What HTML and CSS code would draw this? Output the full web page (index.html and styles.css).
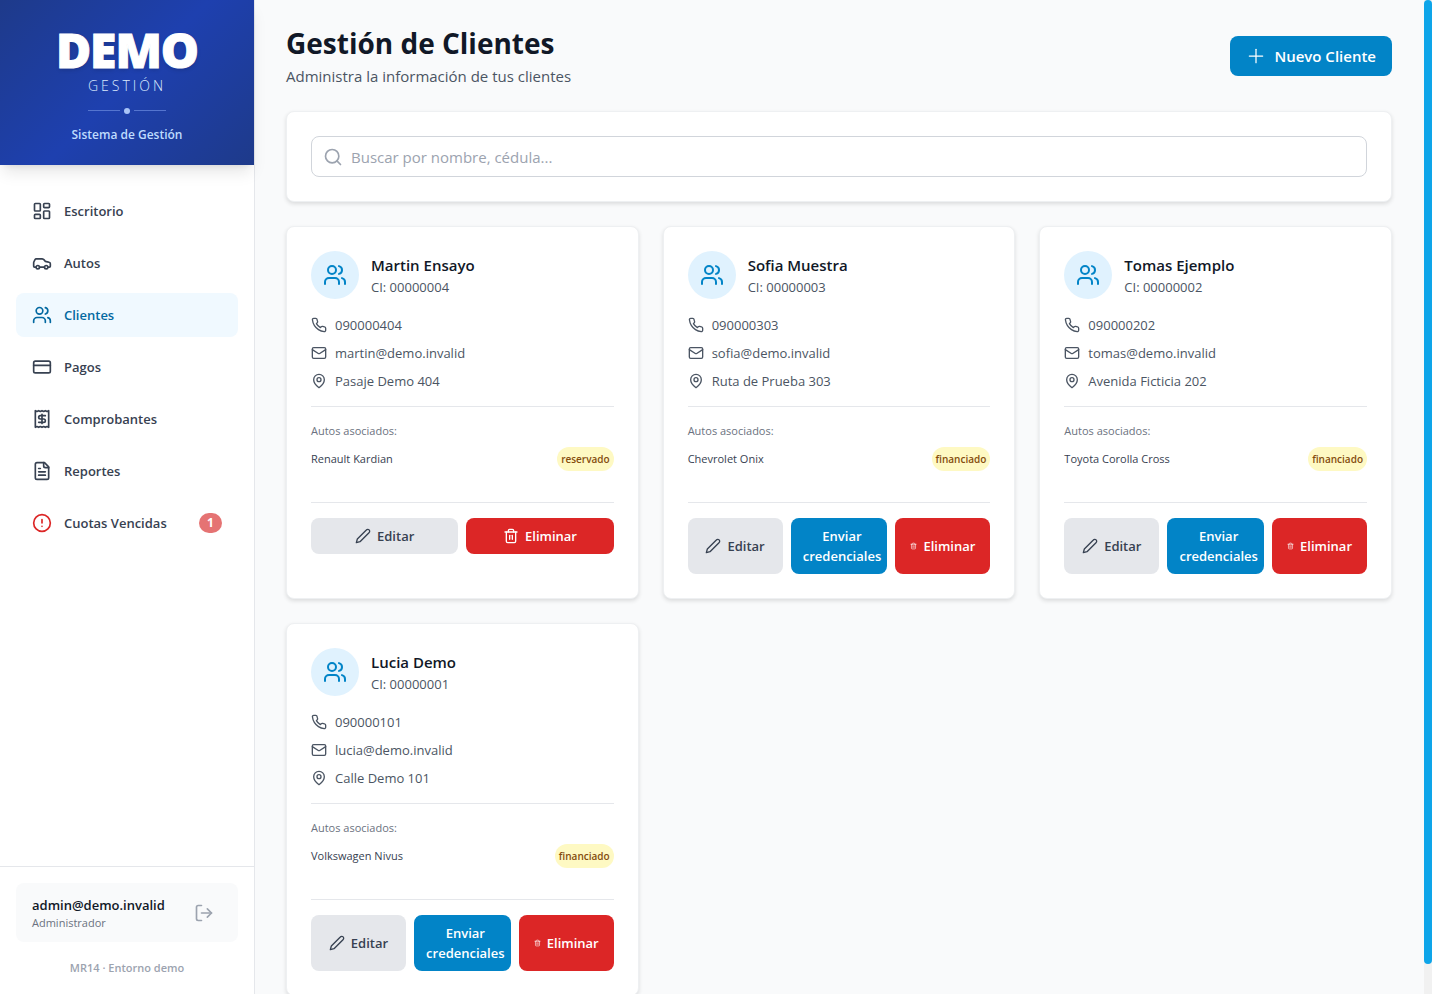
FILE: index.html
```html
<!DOCTYPE html>
<html lang="es">
<head>
<meta charset="utf-8">
<meta name="viewport" content="width=device-width, initial-scale=1">
<title>Gestión de Clientes</title>
<link rel="stylesheet" href="styles.css">
</head>
<body>
<svg class="sprite" aria-hidden="true">
  <symbol id="i-dashboard" viewBox="0 0 24 24"><rect x="3" y="3" width="7" height="9" rx="1"/><rect x="14" y="3" width="7" height="5" rx="1"/><rect x="14" y="12" width="7" height="9" rx="1"/><rect x="3" y="16" width="7" height="5" rx="1"/></symbol>
  <symbol id="i-car" viewBox="0 0 24 24"><path d="M19 17h2c.6 0 1-.4 1-1v-3c0-.9-.7-1.7-1.500-1.900C18.700 10.600 16 10 16 10s-1.300-1.400-2.200-2.300c-.5-.4-1.100-.7-1.800-.7H5c-.6 0-1.100.4-1.400.9l-1.400 2.900A3.700 3.700 0 0 0 2 12v4c0 .6.4 1 1 1h2"/><circle cx="7" cy="17" r="2"/><path d="M9 17h6"/><circle cx="17" cy="17" r="2"/></symbol>
  <symbol id="i-users" viewBox="0 0 24 24"><path d="M16 21v-2a4 4 0 0 0-4-4H6a4 4 0 0 0-4 4v2"/><circle cx="9" cy="7" r="4"/><path d="M22 21v-2a4 4 0 0 0-3-3.870"/><path d="M16 3.130a4 4 0 0 1 0 7.750"/></symbol>
  <symbol id="i-card" viewBox="0 0 24 24"><rect x="2" y="5" width="20" height="14" rx="2"/><path d="M2 10h20"/></symbol>
  <symbol id="i-receipt" viewBox="0 0 24 24"><path d="M4 2v20l2-1 2 1 2-1 2 1 2-1 2 1 2-1 2 1V2l-2 1-2-1-2 1-2-1-2 1-2-1-2 1Z"/><path d="M16 8h-6a2 2 0 1 0 0 4h4a2 2 0 1 1 0 4H8"/><path d="M12 17.500v-11"/></symbol>
  <symbol id="i-file" viewBox="0 0 24 24"><path d="M15 2H6a2 2 0 0 0-2 2v16a2 2 0 0 0 2 2h12a2 2 0 0 0 2-2V7Z"/><path d="M14 2v4a2 2 0 0 0 2 2h4"/><path d="M10 9H8"/><path d="M16 13H8"/><path d="M16 17H8"/></symbol>
  <symbol id="i-alert" viewBox="0 0 24 24"><circle cx="12" cy="12" r="10"/><path d="M12 8v4"/><path d="M12 16h.01"/></symbol>
  <symbol id="i-logout" viewBox="0 0 24 24"><path d="M9 21H5a2 2 0 0 1-2-2V5a2 2 0 0 1 2-2h4"/><path d="m16 17 5-5-5-5"/><path d="M21 12H9"/></symbol>
  <symbol id="i-plus" viewBox="0 0 24 24"><path d="M4 12h16"/><path d="M12 4v16"/></symbol>
  <symbol id="i-search" viewBox="0 0 24 24"><circle cx="11" cy="11" r="8"/><path d="m21 21-4.300-4.300"/></symbol>
  <symbol id="i-phone" viewBox="0 0 24 24"><path d="M22 16.920v3a2 2 0 0 1-2.180 2 19.790 19.790 0 0 1-8.630-3.070 19.500 19.500 0 0 1-6-6 19.790 19.790 0 0 1-3.070-8.670A2 2 0 0 1 4.110 2h3a2 2 0 0 1 2 1.720 12.840 12.840 0 0 0 .7 2.810 2 2 0 0 1-.45 2.110L8.090 9.910a16 16 0 0 0 6 6l1.270-1.270a2 2 0 0 1 2.110-.45 12.840 12.840 0 0 0 2.810.7A2 2 0 0 1 22 16.920z"/></symbol>
  <symbol id="i-mail" viewBox="0 0 24 24"><rect x="2" y="4" width="20" height="16" rx="2"/><path d="m22 7-8.970 5.700a1.940 1.940 0 0 1-2.060 0L2 7"/></symbol>
  <symbol id="i-pin" viewBox="0 0 24 24"><path d="M20 10c0 6-8 12-8 12s-8-6-8-12a8 8 0 0 1 16 0Z"/><circle cx="12" cy="10" r="3"/></symbol>
  <symbol id="i-pencil" viewBox="0 0 24 24"><path d="M17 3a2.850 2.830 0 1 1 4 4L7.500 20.500 2 22l1.500-5.500Z"/></symbol>
  <symbol id="i-trash" viewBox="0 0 24 24"><path d="M3 6h18"/><path d="M19 6v14c0 1-1 2-2 2H7c-1 0-2-1-2-2V6"/><path d="M8 6V4c0-1 1-2 2-2h4c1 0 2 1 2 2v2"/><path d="M10 11v6"/><path d="M14 11v6"/></symbol>
</svg>

<div class="app">
  <aside class="sidebar">
    <div class="brand">
      <div class="brand-name">DEMO</div>
      <div class="brand-sub">GESTIÓN</div>
      <div class="brand-rule"><span class="line"></span><span class="dot"></span><span class="line"></span></div>
      <div class="brand-tag">Sistema de Gestión</div>
    </div>
    <nav class="nav">
      <a class="nav-item" href="#"><svg class="icon icon-20"><use href="#i-dashboard"/></svg>Escritorio</a>
      <a class="nav-item" href="#"><svg class="icon icon-20"><use href="#i-car"/></svg>Autos</a>
      <a class="nav-item active" href="#" aria-current="page"><svg class="icon icon-20"><use href="#i-users"/></svg>Clientes</a>
      <a class="nav-item" href="#"><svg class="icon icon-20"><use href="#i-card"/></svg>Pagos</a>
      <a class="nav-item" href="#"><svg class="icon icon-20"><use href="#i-receipt"/></svg>Comprobantes</a>
      <a class="nav-item" href="#"><svg class="icon icon-20"><use href="#i-file"/></svg>Reportes</a>
      <a class="nav-item" href="#"><svg class="icon icon-20 danger"><use href="#i-alert"/></svg>Cuotas Vencidas<span class="count">1</span></a>
    </nav>
    <div class="side-foot">
      <div class="user">
        <div>
          <div class="user-name">admin@demo.invalid</div>
          <div class="user-role">Administrador</div>
        </div>
        <button class="logout" type="button" aria-label="Cerrar sesión"><svg class="icon icon-20"><use href="#i-logout"/></svg></button>
      </div>
      <p class="version">MR14 · Entorno demo</p>
    </div>
  </aside>

  <main class="main">
    <header class="page-head">
      <div>
        <h1>Gestión de Clientes</h1>
        <p>Administra la información de tus clientes</p>
      </div>
      <button class="btn btn-primary btn-new" type="button"><svg class="icon icon-20 thin"><use href="#i-plus"/></svg>Nuevo Cliente</button>
    </header>

    <section class="card search-card">
      <label class="search"><svg class="icon icon-20"><use href="#i-search"/></svg><input type="text" placeholder="Buscar por nombre, cédula..." aria-label="Buscar por nombre, cédula"></label>
    </section>

    <section class="grid">
      <article class="card client">
        <div class="client-head"><span class="avatar"><svg class="icon icon-24"><use href="#i-users"/></svg></span><div><h2>Martin Ensayo</h2><p>CI: 00000004</p></div></div>
        <ul class="contact">
          <li><svg class="icon icon-16"><use href="#i-phone"/></svg>090000404</li>
          <li><svg class="icon icon-16"><use href="#i-mail"/></svg>martin@demo.invalid</li>
          <li><svg class="icon icon-16"><use href="#i-pin"/></svg>Pasaje Demo 404</li>
        </ul>
        <div class="cars"><p>Autos asociados:</p><div class="car">Renault Kardian<span class="badge">reservado</span></div></div>
        <div class="actions">
          <button class="btn btn-gray" type="button"><svg class="icon icon-16"><use href="#i-pencil"/></svg>Editar</button>
          <button class="btn btn-red" type="button"><svg class="icon icon-16"><use href="#i-trash"/></svg>Eliminar</button>
        </div>
      </article>

      <article class="card client">
        <div class="client-head"><span class="avatar"><svg class="icon icon-24"><use href="#i-users"/></svg></span><div><h2>Sofia Muestra</h2><p>CI: 00000003</p></div></div>
        <ul class="contact">
          <li><svg class="icon icon-16"><use href="#i-phone"/></svg>090000303</li>
          <li><svg class="icon icon-16"><use href="#i-mail"/></svg>sofia@demo.invalid</li>
          <li><svg class="icon icon-16"><use href="#i-pin"/></svg>Ruta de Prueba 303</li>
        </ul>
        <div class="cars"><p>Autos asociados:</p><div class="car">Chevrolet Onix<span class="badge">financiado</span></div></div>
        <div class="actions">
          <button class="btn btn-gray" type="button"><svg class="icon icon-16"><use href="#i-pencil"/></svg>Editar</button>
          <button class="btn btn-primary btn-send" type="button">Enviar credenciales</button>
          <button class="btn btn-red" type="button"><svg class="icon icon-tiny"><use href="#i-trash"/></svg>Eliminar</button>
        </div>
      </article>

      <article class="card client">
        <div class="client-head"><span class="avatar"><svg class="icon icon-24"><use href="#i-users"/></svg></span><div><h2>Tomas Ejemplo</h2><p>CI: 00000002</p></div></div>
        <ul class="contact">
          <li><svg class="icon icon-16"><use href="#i-phone"/></svg>090000202</li>
          <li><svg class="icon icon-16"><use href="#i-mail"/></svg>tomas@demo.invalid</li>
          <li><svg class="icon icon-16"><use href="#i-pin"/></svg>Avenida Ficticia 202</li>
        </ul>
        <div class="cars"><p>Autos asociados:</p><div class="car">Toyota Corolla Cross<span class="badge">financiado</span></div></div>
        <div class="actions">
          <button class="btn btn-gray" type="button"><svg class="icon icon-16"><use href="#i-pencil"/></svg>Editar</button>
          <button class="btn btn-primary btn-send" type="button">Enviar credenciales</button>
          <button class="btn btn-red" type="button"><svg class="icon icon-tiny"><use href="#i-trash"/></svg>Eliminar</button>
        </div>
      </article>

      <article class="card client">
        <div class="client-head"><span class="avatar"><svg class="icon icon-24"><use href="#i-users"/></svg></span><div><h2>Lucia Demo</h2><p>CI: 00000001</p></div></div>
        <ul class="contact">
          <li><svg class="icon icon-16"><use href="#i-phone"/></svg>090000101</li>
          <li><svg class="icon icon-16"><use href="#i-mail"/></svg>lucia@demo.invalid</li>
          <li><svg class="icon icon-16"><use href="#i-pin"/></svg>Calle Demo 101</li>
        </ul>
        <div class="cars"><p>Autos asociados:</p><div class="car">Volkswagen Nivus<span class="badge">financiado</span></div></div>
        <div class="actions">
          <button class="btn btn-gray" type="button"><svg class="icon icon-16"><use href="#i-pencil"/></svg>Editar</button>
          <button class="btn btn-primary btn-send" type="button">Enviar credenciales</button>
          <button class="btn btn-red" type="button"><svg class="icon icon-tiny"><use href="#i-trash"/></svg>Eliminar</button>
        </div>
      </article>
    </section>
  </main>
  <div class="scroll-track" aria-hidden="true"><div class="scroll-thumb"></div></div>
</div>
</body>
</html>
```

FILE: styles.css
```css
* { box-sizing: border-box; margin: 0; padding: 0; }

body {
  font-family: "Open Sans", "Noto Sans", sans-serif;
  font-size: 13px;
  line-height: 20px;
  color: #374151;
  background: #f9fafb;
}

button, input { font: inherit; color: inherit; }
button { border: 0; cursor: pointer; }
ul { list-style: none; }

.sprite { display: none; }
.icon {
  flex: none;
  fill: none;
  stroke: currentColor;
  stroke-width: 2;
  stroke-linecap: round;
  stroke-linejoin: round;
}
.icon-24 { width: 24px; height: 24px; }
.icon-20 { width: 20px; height: 20px; }
.icon-16 { width: 16px; height: 16px; }
.icon-tiny { width: 7px; height: 16px; }
.thin { stroke-width: 1.5; }

.app { display: flex; height: 100vh; overflow: hidden; }

/* Sidebar */
.sidebar {
  flex: none;
  width: 254px;
  display: flex;
  flex-direction: column;
  background: #fff;
  box-shadow: 1px 0 0 #e5e7eb;
}
.brand {
  display: flex;
  flex-direction: column;
  align-items: center;
  padding: 24px 16px 20px;
  color: #fff;
  background: linear-gradient(135deg, #1e3a8a 0%, #1e40af 50%, #1e3a8a 100%);
  box-shadow: 0 10px 15px -3px rgba(0, 0, 0, .1), 0 4px 6px -4px rgba(0, 0, 0, .1);
}
.brand-name {
  font-size: 48px;
  line-height: 52px;
  font-weight: 800;
  letter-spacing: -1px;
  -webkit-text-stroke: 1px #fff;
  text-shadow: 0 2px 4px rgba(0, 0, 0, .15);
}
.brand-sub {
  font-size: 14px;
  line-height: 20px;
  font-weight: 300;
  letter-spacing: 3px;
  color: #dbeafe;
}
.brand-rule { display: flex; align-items: center; gap: 4px; height: 29px; }
.line { width: 32px; height: 1px; background: #5575cf; }
.dot { width: 6px; height: 6px; border-radius: 50%; background: #a9c4f7; }
.brand-tag { font-size: 12px; line-height: 20px; font-weight: 600; color: #bfdbfe; }

.nav { flex: 1; display: flex; flex-direction: column; gap: 8px; padding: 24px 16px; }
.nav-item {
  display: flex;
  align-items: center;
  gap: 12px;
  height: 44px;
  padding: 0 16px;
  border-radius: 8px;
  font-weight: 600;
  color: #374151;
  text-decoration: none;
}
.nav-item.active { background: #f0f9ff; color: #0369a1; }
.danger { color: #dc2626; }
.count {
  margin-left: auto;
  width: 23px;
  border-radius: 10px;
  background: #e57373;
  color: #fff;
  font-size: 12px;
  font-weight: 700;
  text-align: center;
}
.side-foot { padding: 16px; border-top: 1px solid #e5e7eb; }
.user {
  display: flex;
  align-items: center;
  justify-content: space-between;
  padding: 12px 16px 11px;
  border-radius: 8px;
  background: #f9fafb;
}
.user-name { font-weight: 600; color: #111827; }
.user-role { font-size: 11px; line-height: 16px; color: #6b7280; }
.logout { display: flex; padding: 8px; background: none; color: #9ca3af; }
.version { margin-top: 16px; font-size: 11px; line-height: 20px; font-weight: 600; text-align: center; color: #9ca3af; }

/* Content */
.main { flex: 1; min-width: 0; padding: 24px 32px; overflow: hidden; }
.page-head { display: flex; align-items: center; justify-content: space-between; margin-bottom: 23px; }
h1 { font-size: 28px; line-height: 38px; font-weight: 700; color: #111827; }
.page-head p { margin-top: 2px; font-size: 15px; line-height: 24px; color: #4b5563; }

.card {
  background: #fff;
  border: 1px solid #eef0f2;
  border-radius: 8px;
  padding: 24px;
  box-shadow: 0 2px 4px rgba(0, 0, 0, .12);
}
.search-card { margin-bottom: 24px; }
.search {
  display: flex;
  align-items: center;
  gap: 8px;
  height: 41px;
  padding: 0 11px;
  border: 1px solid #d1d5db;
  border-radius: 8px;
  color: #9ca3af;
}
.search input { flex: 1; min-width: 0; border: 0; outline: 0; background: none; font-size: 15px; color: #111827; }
.search input::placeholder { color: #9ca3af; }

.grid { display: grid; grid-template-columns: repeat(3, minmax(0, 1fr)); gap: 24px; }
.client-head { display: flex; align-items: center; gap: 12px; margin-bottom: 16px; }
.avatar {
  display: flex;
  align-items: center;
  justify-content: center;
  width: 48px;
  height: 48px;
  border-radius: 50%;
  background: #e0f2fe;
  color: #0284c7;
}
h2 { font-size: 15px; line-height: 24px; font-weight: 600; color: #111827; }
.client-head p { color: #4b5563; }
.contact { display: flex; flex-direction: column; gap: 8px; color: #4b5563; }
.contact li { display: flex; align-items: center; gap: 8px; }
.cars { margin-top: 15px; padding-top: 16px; border-top: 1px solid #e5e7eb; font-size: 11px; line-height: 16px; }
.cars p { color: #6b7280; }
.car { display: flex; align-items: center; justify-content: space-between; margin-top: 8px; height: 24px; }
.badge { padding: 4px; border-radius: 12px; background: #fef9c3; color: #854d0e; font-size: 10px; font-weight: 600; }
.actions { display: flex; gap: 8px; margin-top: 31px; padding-top: 15px; border-top: 1px solid #e5e7eb; }

.btn { display: flex; align-items: center; justify-content: center; gap: 6px; padding: 8px; border-radius: 8px; font-weight: 600; }
.actions .btn { flex: 1 1 0; min-width: 0; }
.btn-gray { background: #e5e7eb; color: #374151; }
.btn-primary { background: #0284c7; color: #fff; }
.btn-red { background: #dc2626; color: #fff; }
.actions .btn-send { padding: 8px 6px 8px 12px; }
.btn-new { gap: 8px; padding: 8px 16px; font-size: 15px; line-height: 24px; }

.scroll-track { flex: none; width: 8px; background: #f1f1f1; }
.scroll-thumb { height: 97%; border-radius: 4px; background: #0ea5e9; }
```
